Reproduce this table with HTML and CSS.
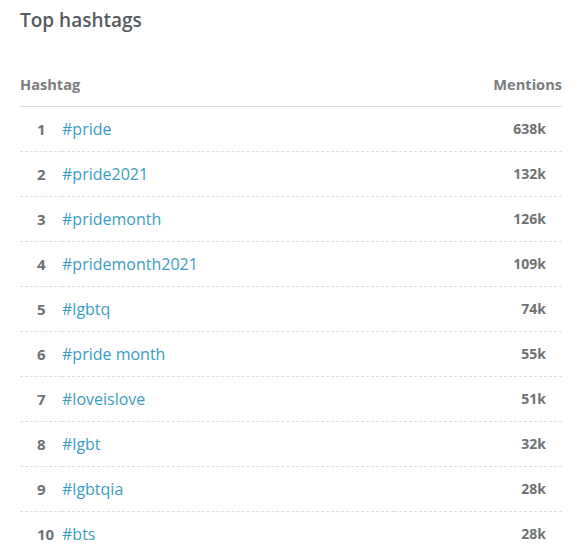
FILE: index.html
```html
<!DOCTYPE html>
<html lang="en">

<head>
  <meta charset="UTF-8">
  <meta name="viewport" content="width=device-width, initial-scale=1.0">
  <title>Top hashtags</title>
  <link rel="stylesheet" href="styles.css">
</head>

<body>
  <div class="panel">
    <h2>Top hashtags</h2>
    <table class="tags">
      <thead>
        <tr>
          <th class="col-tag" colspan="2">Hashtag</th>
          <th class="col-count">Mentions</th>
        </tr>
      </thead>
      <tbody>
        <tr><td class="rank">1</td><td class="tag">#pride</td><td class="count">638k</td></tr>
        <tr><td class="rank">2</td><td class="tag">#pride2021</td><td class="count">132k</td></tr>
        <tr><td class="rank">3</td><td class="tag">#pridemonth</td><td class="count">126k</td></tr>
        <tr><td class="rank">4</td><td class="tag">#pridemonth2021</td><td class="count">109k</td></tr>
        <tr><td class="rank">5</td><td class="tag">#lgbtq</td><td class="count">74k</td></tr>
        <tr><td class="rank">6</td><td class="tag">#pride month</td><td class="count">55k</td></tr>
        <tr><td class="rank">7</td><td class="tag">#loveislove</td><td class="count">51k</td></tr>
        <tr><td class="rank">8</td><td class="tag">#lgbt</td><td class="count">32k</td></tr>
        <tr><td class="rank">9</td><td class="tag">#lgbtqia</td><td class="count">28k</td></tr>
        <tr><td class="rank">10</td><td class="tag">#bts</td><td class="count">28k</td></tr>
      </tbody>
    </table>
  </div>
</body>

</html>
```

FILE: styles.css
```css
* {
  margin: 0;
  padding: 0;
  box-sizing: border-box;
  font-family: 'Open Sans', sans-serif;
}

body {
  background-color: #ffffff;
  color: #555;
}

.panel {
  padding: 7px 21px 0 20px;
}

h2 {
  font-size: 19px;
  font-weight: 600;
  line-height: 26px;
  color: #555a5e;
  margin-bottom: 29px;
}

.tags {
  width: 100%;
  border-collapse: collapse;
}

.tags th {
  height: 44px;
  font-size: 14.6px;
  font-weight: 700;
  color: #7a7d80;
  border-bottom: 1px solid #dcdcdc;
  vertical-align: middle;
}

.col-tag {
  text-align: left;
}

.col-count {
  text-align: right;
}

.tags td {
  height: 45px;
  border-bottom: 1px dashed #dedede;
  vertical-align: middle;
}

.rank {
  width: 42px;
  padding-left: 17px;
  font-size: 15px;
  font-weight: 700;
  color: #6f7275;
}

.tag {
  font-size: 16px;
  color: #3b9dc2;
}

.count {
  text-align: right;
  padding-right: 16px;
  font-size: 14px;
  font-weight: 700;
  color: #6f7275;
}
```
